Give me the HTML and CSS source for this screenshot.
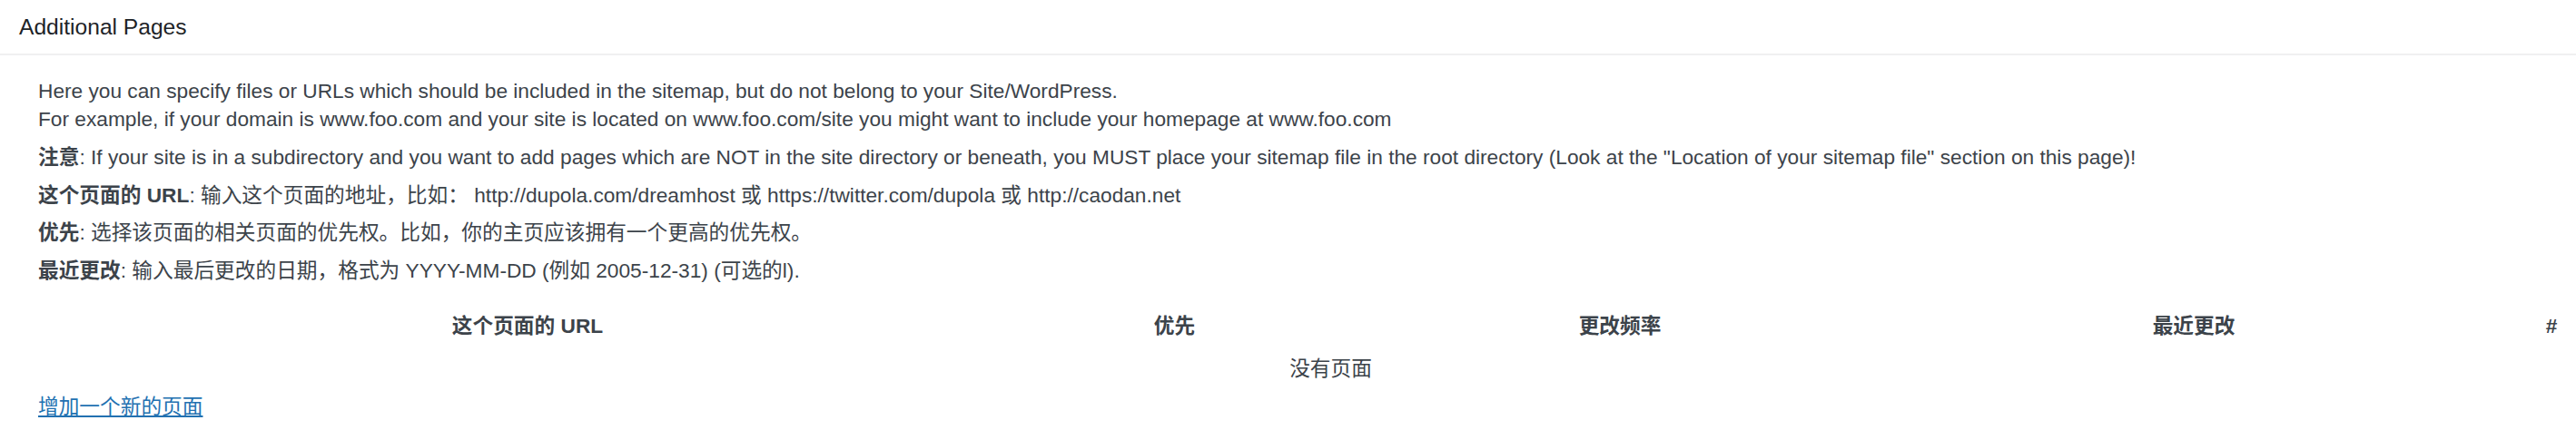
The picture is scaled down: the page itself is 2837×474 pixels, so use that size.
FILE: index.html
```html
<!DOCTYPE html>
<html lang="zh-CN">
<head>
<meta charset="utf-8">
<title>Additional Pages</title>
<link rel="stylesheet" href="styles.css">
</head>
<body>
<div class="postbox">
  <h2 class="hndle">Additional Pages</h2>
  <div class="inside">
    <ul class="notes">
      <li>Here you can specify files or URLs which should be included in the sitemap, but do not belong to your Site/WordPress.<br>For example, if your domain is www.foo.com and your site is located on www.foo.com/site you might want to include your homepage at www.foo.com</li>
      <li><strong>注意</strong>: If your site is in a subdirectory and you want to add pages which are NOT in the site directory or beneath, you MUST place your sitemap file in the root directory (Look at the "Location of your sitemap file" section on this page)!</li>
      <li><strong>这个页面的 URL</strong>: 输入这个页面的地址，比如： http://dupola.com/dreamhost 或 https://twitter.com/dupola 或 http://caodan.net</li>
      <li><strong>优先</strong>: 选择该页面的相关页面的优先权。比如，你的主页应该拥有一个更高的优先权。</li>
      <li><strong>最近更改</strong>: 输入最后更改的日期，格式为 YYYY-MM-DD (例如 2005-12-31) (可选的l).</li>
    </ul>
    <div class="page-table">
      <div class="th">这个页面的 URL</div>
      <div class="th">优先</div>
      <div class="th">更改频率</div>
      <div class="th">最近更改</div>
      <div class="th">#</div>
      <div class="td empty">没有页面</div>
    </div>
    <a class="add-link" href="#">增加一个新的页面</a>
  </div>
</div>
</body>
</html>
```

FILE: styles.css
```css
html, body {
  margin: 0;
  padding: 0;
  background: #ffffff;
  overflow: hidden;
}

body {
  font-family: "Liberation Sans", "Noto Sans CJK SC", sans-serif;
  color: #3c434a;
  font-size: 22.7px;
}

.postbox {
  background: #ffffff;
}

.hndle {
  margin: 0;
  height: 59px;
  padding: 0 21px;
  font-size: 24.6px;
  line-height: 59px;
  font-weight: 400;
  color: #1d2327;
  border-bottom: 2px solid #f0f0f1;
}

.inside {
  padding: 0 0 0 42px;
}

.notes {
  list-style: none;
  margin: 24px 0 0 0;
  padding: 0;
}

.notes li {
  line-height: 31px;
  margin: 0 0 10.8px 0;
}

.notes li:last-child {
  margin-bottom: 0;
}

.notes strong {
  font-weight: 700;
  color: #3c434a;
}

.url-gap {
  word-spacing: 0;
}

.page-table {
  display: grid;
  grid-template-columns: 1090px 323px 646px 606px 170px;
  column-gap: 6px;
  row-gap: 5.4px;
  width: 2859px;
  margin: 18.8px 0 0 -6px;
  padding: 5.4px 0;
}

.th,
.td {
  padding: 5.4px 0;
  line-height: 31px;
  text-align: center;
}

.th {
  font-weight: 700;
}

.empty {
  grid-column: 1 / -1;
}

.add-link {
  display: inline-block;
  line-height: 31px;
  color: #2271b1;
  text-decoration: underline;
}
```
